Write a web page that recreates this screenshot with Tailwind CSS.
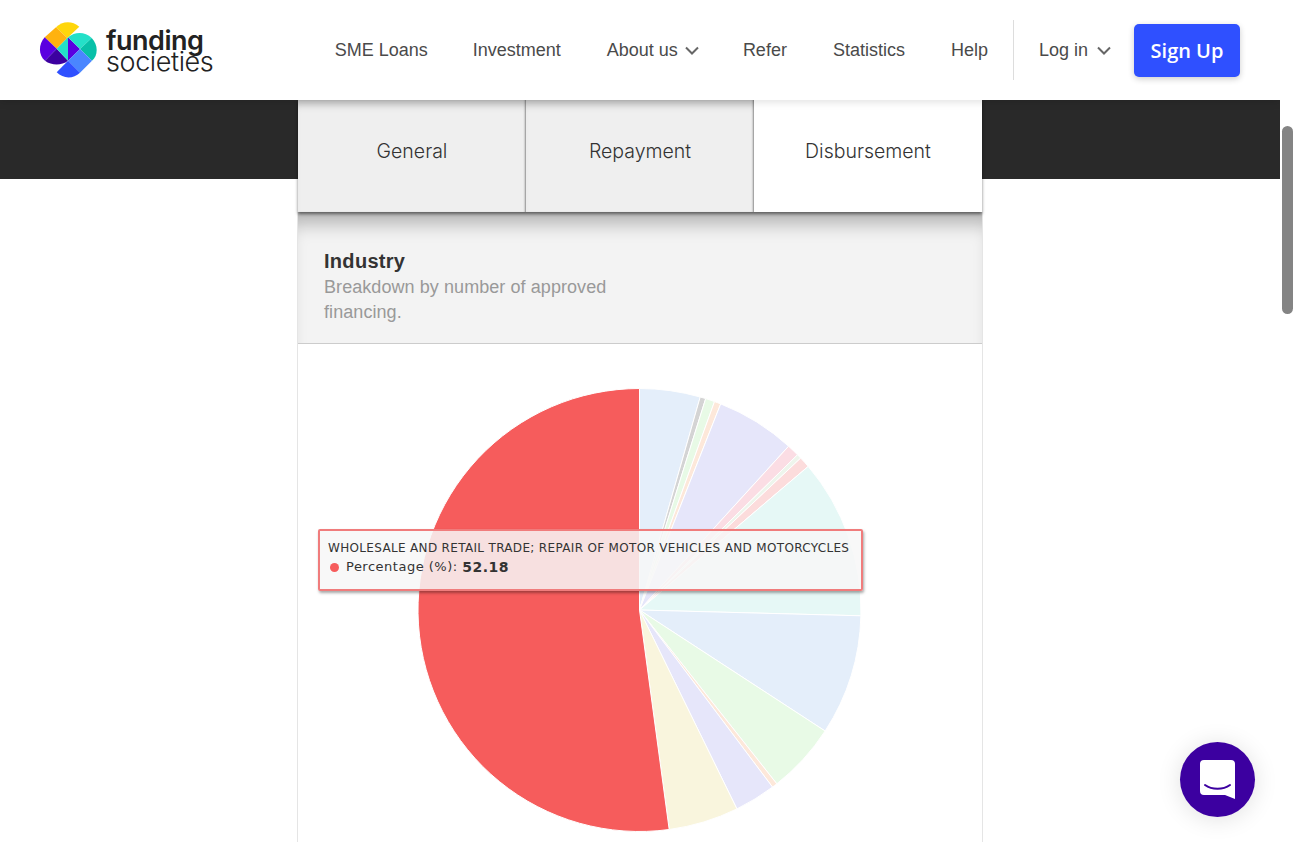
<!DOCTYPE html>
<html>
<head>
<meta charset="utf-8">
<script src="https://cdn.jsdelivr.net/npm/@tailwindcss/browser@4"></script>
</head>
<body class="h-[842px] overflow-hidden bg-white font-['Liberation_Sans',sans-serif]">
<div class="flex h-[842px] w-[1295px]">
  <div class="relative h-[842px] w-[1280px] overflow-hidden">
    <header class="relative z-20 flex h-[100px] items-center bg-white pl-[40px] pr-[40px]">
      <a class="flex items-center gap-[9px]">
        <svg width="57" height="58" viewBox="0 0 57 58" class="shrink-0 overflow-visible">
          <path d="M16 6.3 C21.7 .3 31.7 -1 39.3 5.7 L27.3 17 Z" fill="#ffd60a"/>
          <path d="M4.7 16.3 L16 6.3 L27.3 17 L16.7 27.7 Z" fill="#ffb20f"/>
          <path d="M4.7 16.3 L16.7 27.7 L5 39.7 C-1.7 34.7 -1.7 23 4.7 16.3 Z" fill="#5a00e0"/>
          <path d="M5 39.7 L16.7 27.7 L28 39.7 C21.7 44.7 11.7 44.7 5 39.7 Z" fill="#3c00a0"/>
          <path d="M16.7 27.7 L28 16.3 L28 39.7 Z" fill="#24e0c8"/>
          <path d="M28 16.3 L40 28 L28 39.7 Z" fill="#5a00e0"/>
          <path d="M28 16.3 C35 10.3 45 10.3 51.7 17 L40 28 Z" fill="#24e0c8"/>
          <path d="M51.7 17 C58.3 23.7 58.3 34.7 52 39.7 L40 28 Z" fill="#08c0a8"/>
          <path d="M40 28 L52 39.7 L40 51.7 L28 39.7 Z" fill="#4a86ff"/>
          <path d="M28 39.7 L40 51.7 C33.3 58 23.3 58 16.7 51.3 Z" fill="#2f50ff"/>
        </svg>
        <span class="flex flex-col font-['Inter',sans-serif] text-[#222]">
          <span class="-mt-[1px] text-[27px] font-semibold leading-[24px] tracking-[-0.5px]">funding</span>
          <span class="text-[27px] font-light leading-[18px] tracking-[-0.4px]">societies</span>
        </span>
      </a>
      <nav class="ml-auto flex items-center text-[18px] text-[#4a4a4a]">
        <a class="mr-[45px]">SME Loans</a>
        <a class="mr-[46px]">Investment</a>
        <a class="mr-[44px] flex items-center gap-[7px]">About us
          <svg width="14" height="9" viewBox="0 0 14 9" fill="none" stroke="#666" stroke-width="2"><path d="M1 1.5 L7 7.5 L13 1.5"/></svg></a>
        <a class="mr-[46px]">Refer</a>
        <a class="mr-[46px]">Statistics</a>
        <a>Help</a>
        <span class="ml-[25px] mr-[25px] h-[60px] w-px bg-[#ddd]"></span>
        <a class="mr-[23px] flex items-center gap-[9px]">Log in
          <svg width="14" height="9" viewBox="0 0 14 9" fill="none" stroke="#666" stroke-width="2"><path d="M1 1.5 L7 7.5 L13 1.5"/></svg></a>
        <a class="flex h-[53px] w-[106px] items-center justify-center rounded-[5px] bg-[#2f50ff] pt-[2px] font-['Open_Sans',sans-serif] text-[20px] font-semibold text-white shadow-[0_2px_6px_rgba(0,0,0,0.2)]">Sign Up</a>
      </nav>
    </header>

    <div class="absolute left-0 top-[100px] h-[79px] w-[1280px] bg-[#292929]"></div>

    <main class="relative z-10 mx-auto w-[684px]">
      <div class="relative z-10 flex h-[112px] shadow-[0_2px_3px_rgba(0,0,0,0.5)] font-['Inter',sans-serif] text-[19.5px] font-light text-[#333]">
        <div class="flex w-[228px] items-center justify-center bg-[#efefef] pb-[8px] shadow-[inset_0_10px_8px_-6px_rgba(0,0,0,0.22),inset_-2px_0_2px_-1px_rgba(0,0,0,0.4)]">General</div>
        <div class="flex w-[228px] items-center justify-center bg-[#efefef] pb-[8px] shadow-[inset_0_10px_8px_-6px_rgba(0,0,0,0.22),inset_-2px_0_2px_-1px_rgba(0,0,0,0.4)]">Repayment</div>
        <div class="flex w-[228px] items-center justify-center bg-white pb-[8px]">Disbursement</div>
      </div>
      <section class="-mx-px h-[630px] border-x border-[#e5e5e5] bg-white">
        <div class="h-[132px] border-b border-[#ccc] bg-[#f3f3f3] pl-[26px] pt-[37px] shadow-[inset_0_22px_18px_-10px_rgba(0,0,0,0.26)]">
          <h2 class="text-[20px] font-bold leading-[24px] tracking-[0.3px] text-[#333]">Industry</h2>
          <p class="mt-[2px] w-[320px] text-[18px] leading-[25px] tracking-[0.07px] text-[#999]">Breakdown by number of approved financing.</p>
        </div>
        <div class="relative">
          <svg width="684" height="498" viewBox="0 0 684 498" class="block">
            <g transform="translate(341.5 266)" stroke="#fff" stroke-width="1">
              <path d="M0 0 L0 -221.5 A221.5 221.5 0 0 1 60.7 -213 Z" fill="#e4eefa"/>
              <path d="M0 0 L60.7 -213 A221.5 221.5 0 0 1 66.2 -211.4 Z" fill="#d4d4d4"/>
              <path d="M0 0 L66.2 -211.4 A221.5 221.5 0 0 1 75 -208.4 Z" fill="#e8fae6"/>
              <path d="M0 0 L75 -208.4 A221.5 221.5 0 0 1 81.2 -206.1 Z" fill="#fde8da"/>
              <path d="M0 0 L81.2 -206.1 A221.5 221.5 0 0 1 149.1 -163.8 Z" fill="#e6e6fa"/>
              <path d="M0 0 L149.1 -163.8 A221.5 221.5 0 0 1 158 -155.2 Z" fill="#fbdde4"/>
              <path d="M0 0 L158 -155.2 A221.5 221.5 0 0 1 161.2 -151.9 Z" fill="#eef5ec"/>
              <path d="M0 0 L161.2 -151.9 A221.5 221.5 0 0 1 168.7 -143.6 Z" fill="#fcdcdc"/>
              <path d="M0 0 L168.7 -143.6 A221.5 221.5 0 0 1 221.4 5.8 Z" fill="#e6f8f6"/>
              <path d="M0 0 L221.4 5.8 A221.5 221.5 0 0 1 185.6 121 Z" fill="#e4eefa"/>
              <path d="M0 0 L185.6 121 A221.5 221.5 0 0 1 137.3 173.8 Z" fill="#e8fae6"/>
              <path d="M0 0 L137.3 173.8 A221.5 221.5 0 0 1 133 177.1 Z" fill="#fde8da"/>
              <path d="M0 0 L133 177.1 A221.5 221.5 0 0 1 97.4 198.9 Z" fill="#e6e6fa"/>
              <path d="M0 0 L97.4 198.9 A221.5 221.5 0 0 1 29.7 219.5 Z" fill="#f9f5dd"/>
              <path d="M0 0 L29.7 219.5 A221.5 221.5 0 1 1 0 -221.5 Z" fill="#f65c5c"/>
            </g>
          </svg>
          <div class="absolute left-[20px] top-[185px] flex h-[62px] w-[545px] flex-col rounded-[2px] border-2 border-[#f07c7c] bg-[#f7f7f7]/85 pl-[8px] pt-[9px] font-['DejaVu_Sans',sans-serif] text-[#333] shadow-[1px_2px_3px_rgba(0,0,0,0.35)]">
            <span class="whitespace-nowrap text-[12px] leading-[16px] tracking-[0.33px]">WHOLESALE AND RETAIL TRADE; REPAIR OF MOTOR VEHICLES AND MOTORCYCLES</span>
            <span class="mt-[1px] flex items-center whitespace-nowrap text-[13px] leading-[20px] tracking-[0.5px]"><span class="ml-[2px] mr-[7px] h-[9px] w-[9px] rounded-full bg-[#f65c5c]"></span>Percentage (%):&nbsp;<b class="text-[14px] font-bold">52.18</b></span>
          </div>
        </div>
      </section>
    </main>
    <div class="pointer-events-none absolute left-0 top-0 z-30 h-[100px] w-full shadow-[0_2px_8px_rgba(0,0,0,0.12)]"></div>
    <button class="absolute left-[1180px] top-[742px] z-40 flex h-[75px] w-[75px] items-center justify-center rounded-full bg-[#3c00a0] shadow-[0_2px_24px_rgba(0,0,0,0.12)]">
      <svg width="36" height="41" viewBox="0 0 36 41"><path d="M4 1 H31 A4 4 0 0 1 35 5 V40 L25 36 H4 A4 4 0 0 1 0 32 V5 A4 4 0 0 1 4 1 Z" fill="#fff"/><path d="M5 26 C12 31 23 31 30 26" fill="none" stroke="#3c00a0" stroke-width="2" stroke-linecap="round"/></svg>
    </button>
  </div>
  <div class="relative h-[842px] w-[15px] bg-white">
    <div class="absolute left-[2px] top-[126px] h-[188px] w-[11px] rounded-full bg-[#848484]"></div>
  </div>
</div>
</body>
</html>
